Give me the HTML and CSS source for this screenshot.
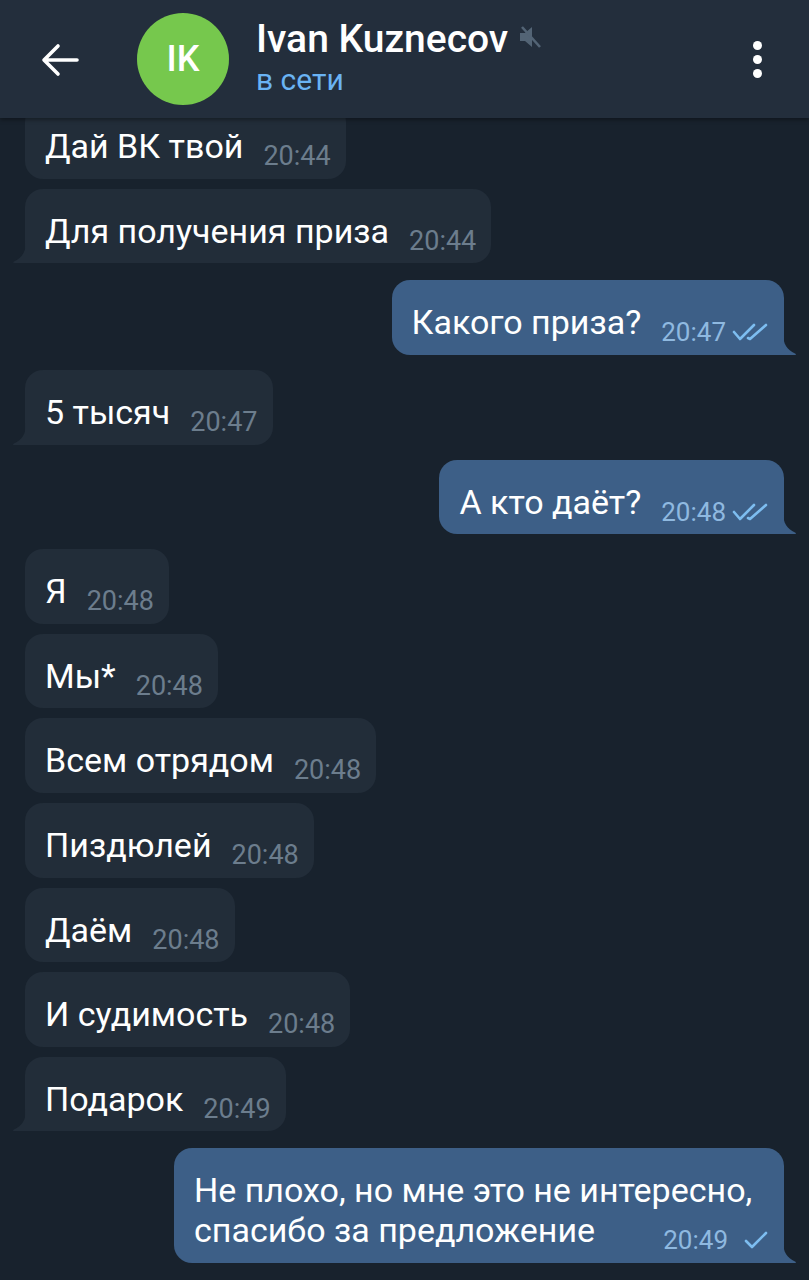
FILE: index.html
```html
<!DOCTYPE html>
<html lang="ru">
<head>
    <meta charset="UTF-8">
    <meta name="viewport" content="width=device-width, initial-scale=1.0">
    <title>Ivan Kuznecov</title>
    <link rel="stylesheet" href="styles.css">
</head>
<body>
    <header class="topbar">
        <div class="back">
            <svg width="38" height="34" viewBox="0 0 38 34"><path d="M36 17H4M17 3L3 17l14 14" fill="none" stroke="#fff" stroke-width="3.6" stroke-linecap="round" stroke-linejoin="round"/></svg>
        </div>
        <div class="avatar">IK</div>
        <div class="peer">
            <div class="name">Ivan Kuznecov
                <svg class="mute" width="24" height="26" viewBox="0 0 24 26"><path d="M2 9h5l7-6v20l-7-6H2z" fill="#536475"/><path d="M4 3l18 20" stroke="#536475" stroke-width="2.6"/></svg>
            </div>
            <div class="status">в сети</div>
        </div>
        <div class="more"><span></span><span></span><span></span></div>
    </header>

    <main class="chat">
        <div class="msg in">
            <div class="text">Дай ВК твой<span class="meta">20:44</span></div>
        </div>
        <div class="msg in tail">
            <svg class="tip" width="14" height="22" viewBox="0 0 14 22"><path d="M14 0C14 11 10 17 2 20.4 0.6 21 0.8 22 2.4 22H14z" fill="#222d39"/></svg>
            <div class="text">Для получения приза<span class="meta">20:44</span></div>
        </div>

        <div class="msg out tail gap wide">
            <svg class="tip" width="14" height="22" viewBox="0 0 14 22"><path d="M0 0C0 11 4 17 12 20.4 13.4 21 13.2 22 11.6 22H0z" fill="#3d5f87"/></svg>
            <div class="text">Какого приза?<span class="meta">20:47 <svg class="check" width="38" height="20" viewBox="0 0 38 20"><path d="M2 10l6 7L22 3M16 16l2 1L34 3" fill="none" stroke="#7dbdf0" stroke-width="2.6" stroke-linecap="round" stroke-linejoin="round"/></svg></span></div>
        </div>

        <div class="msg in tail gap">
            <svg class="tip" width="14" height="22" viewBox="0 0 14 22"><path d="M14 0C14 11 10 17 2 20.4 0.6 21 0.8 22 2.4 22H14z" fill="#222d39"/></svg>
            <div class="text">5 тысяч<span class="meta">20:47</span></div>
        </div>

        <div class="msg out tail gap">
            <svg class="tip" width="14" height="22" viewBox="0 0 14 22"><path d="M0 0C0 11 4 17 12 20.4 13.4 21 13.2 22 11.6 22H0z" fill="#3d5f87"/></svg>
            <div class="text">А кто даёт?<span class="meta">20:48 <svg class="check" width="38" height="20" viewBox="0 0 38 20"><path d="M2 10l6 7L22 3M16 16l2 1L34 3" fill="none" stroke="#7dbdf0" stroke-width="2.6" stroke-linecap="round" stroke-linejoin="round"/></svg></span></div>
        </div>

        <div class="msg in gap">
            <div class="text">Я<span class="meta">20:48</span></div>
        </div>
        <div class="msg in">
            <div class="text">Мы*<span class="meta">20:48</span></div>
        </div>
        <div class="msg in">
            <div class="text">Всем отрядом<span class="meta">20:48</span></div>
        </div>
        <div class="msg in">
            <div class="text">Пиздюлей<span class="meta">20:48</span></div>
        </div>
        <div class="msg in">
            <div class="text">Даём<span class="meta">20:48</span></div>
        </div>
        <div class="msg in">
            <div class="text">И судимость<span class="meta">20:48</span></div>
        </div>
        <div class="msg in tail">
            <svg class="tip" width="14" height="22" viewBox="0 0 14 22"><path d="M14 0C14 11 10 17 2 20.4 0.6 21 0.8 22 2.4 22H14z" fill="#222d39"/></svg>
            <div class="text">Подарок<span class="meta">20:49</span></div>
        </div>

        <div class="msg out tail gap wide">
            <svg class="tip" width="14" height="22" viewBox="0 0 14 22"><path d="M0 0C0 11 4 17 12 20.4 13.4 21 13.2 22 11.6 22H0z" fill="#3d5f87"/></svg>
            <div class="text">Не плохо, но мне это не интересно, спасибо за предложение<span class="meta">20:49 <svg class="check single" width="30" height="20" viewBox="0 0 30 20"><path d="M6 11l6 6L26 3" fill="none" stroke="#7dbdf0" stroke-width="2.6" stroke-linecap="round" stroke-linejoin="round"/></svg></span></div>
        </div>
    </main>
</body>
</html>
```

FILE: styles.css
```css
body {
    margin: 0;
    height: 1280px;
    overflow: hidden;
    background-color: #18222d;
    font-family: Roboto, 'Noto Sans', sans-serif;
    color: #fff;
    display: flex;
    flex-direction: column;
}

.topbar {
    height: 118px;
    flex-shrink: 0;
    background-color: #232e3c;
    display: flex;
    align-items: center;
    padding: 0 0 0 41px;
    box-shadow: 0 2px 4px rgba(0, 0, 0, 0.35);
    position: relative;
    z-index: 2;
}

.back {
    width: 38px;
    height: 34px;
    display: flex;
    margin-top: 2px;
}

.avatar {
    width: 92px;
    height: 92px;
    border-radius: 50%;
    background-color: #76c84d;
    margin-left: 58px;
    display: flex;
    align-items: center;
    justify-content: center;
    font-size: 36px;
    font-weight: 500;
}

.peer {
    margin-left: 27px;
    flex: 1;
    margin-top: -2px;
}

.name {
    font-size: 39px;
    font-weight: 500;
    line-height: 42px;
    display: flex;
    align-items: center;
}

.mute {
    margin-left: 10px;
    margin-top: -4px;
}

.status {
    font-size: 30px;
    line-height: 36px;
    color: #6ab3f3;
    margin-top: 2px;
}

.more {
    width: 14px;
    display: flex;
    flex-direction: column;
    gap: 5px;
    margin-right: 45px;
}

.more span {
    width: 9px;
    height: 9px;
    border-radius: 50%;
    background-color: #fff;
    margin: 0 auto;
}

.chat {
    flex: 1;
    overflow: hidden;
    display: flex;
    flex-direction: column;
    justify-content: flex-end;
    padding: 0 25px 17px;
}

.msg {
    position: relative;
    width: fit-content;
    max-width: 576px;
    flex-shrink: 0;
    margin-top: 10px;
    padding: 22px 15px 12.6px 20px;
    border-radius: 18px;
    background-color: #222d39;
    display: flow-root;
}

.msg.gap {
    margin-top: 15px;
}

.msg.gap.wide {
    margin-top: 17px;
}

.msg.out {
    align-self: flex-end;
    background-color: #3d5f87;
    padding-right: 14px;
}

.msg.in.tail {
    border-bottom-left-radius: 0;
}

.msg.out.tail {
    border-bottom-right-radius: 0;
}

.tip {
    position: absolute;
    bottom: 0;
}

.in .tip {
    left: -13px;
}

.out .tip {
    right: -13px;
}

.text {
    font-size: 34px;
    line-height: 40px;
}

.meta {
    float: right;
    margin: 15px 0 -15px 20px;
    font-size: 27px;
    line-height: 30px;
    color: #6c7d8d;
    display: flex;
    align-items: center;
}

.out .meta {
    color: #8fb9e0;
    font-size: 26px;
}

.check {
    margin-left: 6px;
}

.check.single {
    margin-left: 12px;
}
```
